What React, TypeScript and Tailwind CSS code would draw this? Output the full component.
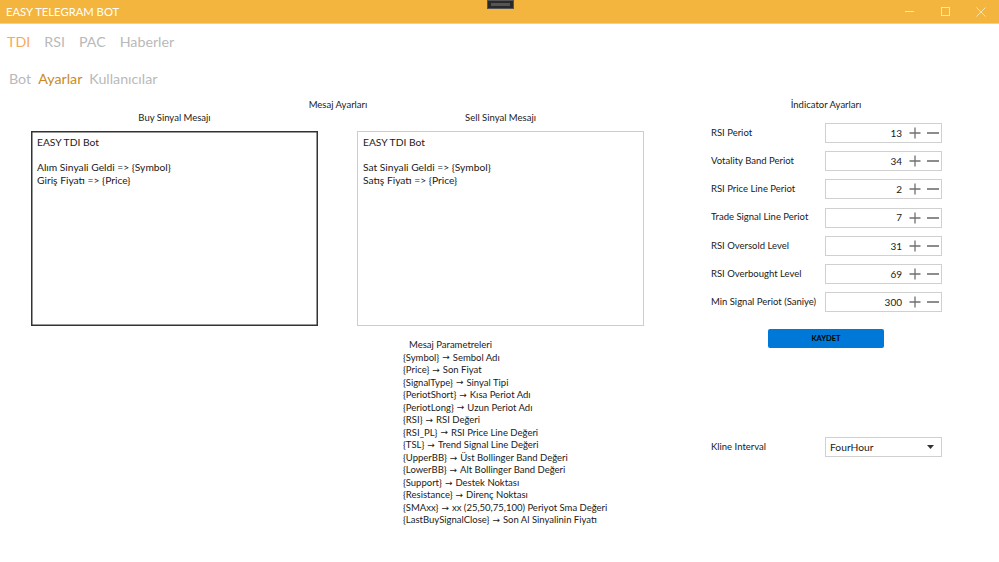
import React from "react";

const F = { fontFamily: 'Lato, "Noto Sans", sans-serif' };

const rows: [string, string][] = [
  ["RSI Periot", "13"],
  ["Votality Band Periot", "34"],
  ["RSI Price Line Periot", "2"],
  ["Trade Signal Line Periot", "7"],
  ["RSI Oversold Level", "31"],
  ["RSI Overbought Level", "69"],
  ["Min Signal Periot (Saniye)", "300"],
];

const params: [string, string][] = [
  ["{Symbol}", "Sembol Adı"],
  ["{Price}", "Son Fiyat"],
  ["{SignalType}", "Sinyal Tipi"],
  ["{PeriotShort}", "Kısa Periot Adı"],
  ["{PeriotLong}", "Uzun Periot Adı"],
  ["{RSI}", "RSI Değeri"],
  ["{RSI_PL}", "RSI Price Line Değeri"],
  ["{TSL}", "Trend Signal Line Değeri"],
  ["{UpperBB}", "Üst Bollinger Band Değeri"],
  ["{LowerBB}", "Alt Bollinger Band Değeri"],
  ["{Support}", "Destek Noktası"],
  ["{Resistance}", "Direnç Noktası"],
  ["{SMAxx}", "xx (25,50,75,100) Periyot Sma Değeri"],
  ["{LastBuySignalClose}", "Son Al Sinyalinin Fiyatı"],
];

function Plus() {
  return (
    <svg width="12" height="12" viewBox="0 0 12 12">
      <path d="M6 0.5V11.5M0.5 6H11.5" stroke="#707070" strokeWidth="1.3" />
    </svg>
  );
}
function Minus() {
  return (
    <svg width="12" height="12" viewBox="0 0 12 12">
      <path d="M0 6H12" stroke="#707070" strokeWidth="1.6" />
    </svg>
  );
}

export default function App() {
  return (
    <div className="w-[999px] h-[562px] bg-white overflow-hidden text-[#1a1a1a]" style={F}>
      {/* title bar */}
      <div className="relative h-6 bg-[#f3b53d] flex items-center border-b border-[#f6d08a]">
        <div className="pl-[6px] text-white text-[11.25px] leading-none">EASY TELEGRAM BOT</div>
        <div className="absolute left-[487px] top-0 w-[27px] h-[9px] bg-[#2a2a2a] border border-[#555] flex items-center justify-center">
          <div className="w-[19px] h-[3px] bg-[#555]" />
        </div>
        <div className="ml-auto flex items-center h-full">
          <div className="w-[36px] flex justify-center">
            <div className="w-[9px] h-px bg-[#fbe5b8]" />
          </div>
          <div className="w-[36px] flex justify-center">
            <div className="w-[9px] h-[9px] border border-[#fbe5b8]" />
          </div>
          <div className="w-[36px] flex justify-center">
            <svg width="10" height="10" viewBox="0 0 10 10">
              <path d="M0.5 0.5L9.5 9.5M9.5 0.5L0.5 9.5" stroke="#fbe5b8" strokeWidth="1" />
            </svg>
          </div>
        </div>
      </div>

      {/* tabs */}
      <div className="flex items-center gap-[14px] pl-[7px] mt-[8px] h-[20px] text-[14.25px] leading-none">
        <span className="text-[#f7a95c]">TDI</span>
        <span className="text-[#b9b9b9]">RSI</span>
        <span className="text-[#b9b9b9]">PAC</span>
        <span className="text-[#b9b9b9]">Haberler</span>
      </div>
      {/* sub tabs */}
      <div className="flex items-center gap-[7px] pl-[9px] mt-[17px] h-[20px] text-[14.25px] leading-none">
        <span className="text-[#b9b9b9]">Bot</span>
        <span className="text-[#c98a1f]">Ayarlar</span>
        <span className="text-[#b9b9b9]">Kullanıcılar</span>
      </div>

      {/* content */}
      <div className="flex mt-[10px] text-[9.5px] leading-[12.5px]">
        {/* message settings */}
        <div className="w-[676px] flex flex-col">
          <div className="text-center h-[13px]">Mesaj Ayarları</div>
          <div className="flex pl-[31px] gap-[39px]">
            <div className="w-[287px] flex flex-col">
              <div className="text-center h-[19px]">Buy Sinyal Mesajı</div>
              <div className="h-[195px] border border-[#333] shadow-[inset_0_0_0_0.5px_#333] px-[5px] py-[4px] text-[10.25px]">
                <div>EASY TDI Bot</div>
                <div>&nbsp;</div>
                <div>Alım Sinyali Geldi =&gt; {"{Symbol}"}</div>
                <div>Giriş Fiyatı =&gt; {"{Price}"}</div>
              </div>
            </div>
            <div className="w-[287px] flex flex-col">
              <div className="text-center h-[19px]">Sell Sinyal Mesajı</div>
              <div className="h-[195px] border border-[#cdcdcd] px-[5px] py-[4px] text-[10.25px]">
                <div>EASY TDI Bot</div>
                <div>&nbsp;</div>
                <div>Sat Sinyali Geldi =&gt; {"{Symbol}"}</div>
                <div>Satış Fiyatı =&gt; {"{Price}"}</div>
              </div>
            </div>
          </div>
          <div className="pl-[403px] mt-[13px]">
            <div className="pl-[6px] h-[12.54px]">Mesaj Parametreleri</div>
            {params.map(([a, b]) => (
              <div key={a} className="whitespace-nowrap h-[12.54px] flex items-center">
                <span>{a}</span>
                <span
                  style={{ fontFamily: '"DejaVu Sans", sans-serif' }}
                  className="text-[9px] leading-none mx-[3px]"
                >
                  →
                </span>
                <span>{b}</span>
              </div>
            ))}
          </div>
        </div>

        {/* indicator settings */}
        <div className="ml-[14px] w-[272px] flex flex-col">
          <div className="text-center h-[13px]">İndicator Ayarları</div>
          <div className="flex flex-col mt-[7px]">
            {rows.map(([l, v]) => (
              <div key={l} className="flex items-center h-[28.2px] pl-[21px]">
                <div className="w-[114px] whitespace-nowrap">{l}</div>
                <div className="w-[117px] h-[20px] border border-[#d0d0d0] flex items-center justify-end pr-[2px]">
                  <span className="text-[10px]">{v}</span>
                  <span className="ml-[7px] flex">
                    <Plus />
                  </span>
                  <span className="ml-[6px] flex">
                    <Minus />
                  </span>
                </div>
              </div>
            ))}
          </div>
          <div className="flex justify-center mt-[13px]">
            <div className="w-[116px] h-[19px] rounded-[2px] bg-[#0078d7] flex items-center justify-center text-[7.5px] font-bold text-black">
              KAYDET
            </div>
          </div>
          <div className="flex items-center pl-[21px] mt-[89px]">
            <div className="w-[114px]">Kline Interval</div>
            <div className="w-[117px] h-[20px] border border-[#d0d0d0] flex items-center pl-[4px] pr-[7px] text-[10.25px]">
              <span>FourHour</span>
              <svg className="ml-auto" width="7" height="4" viewBox="0 0 7 4">
                <path d="M0 0H7L3.5 4Z" fill="#333" />
              </svg>
            </div>
          </div>
        </div>
      </div>
    </div>
  );
}
